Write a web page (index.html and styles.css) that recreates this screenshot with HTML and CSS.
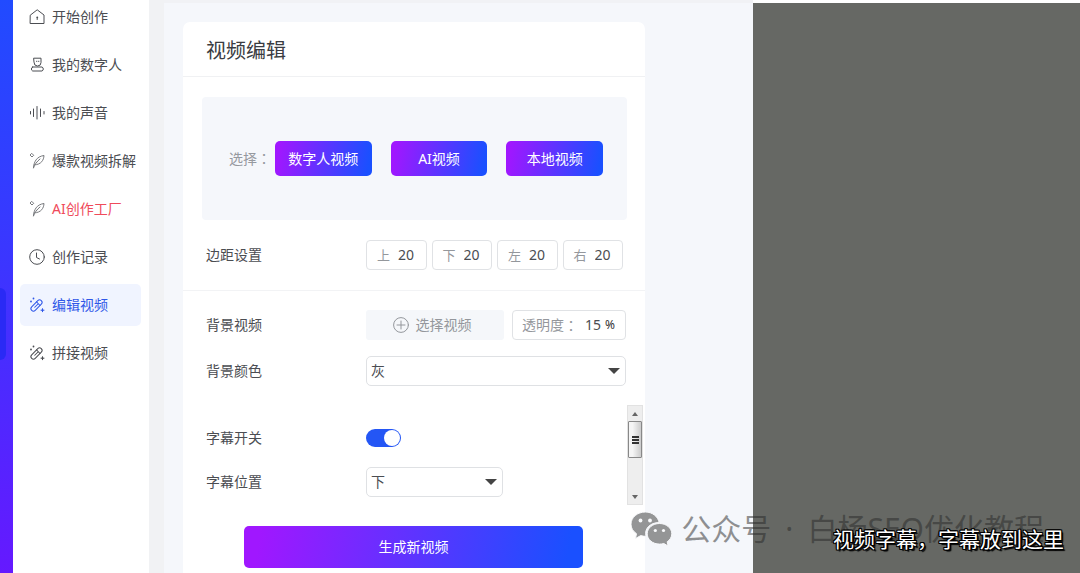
FILE: index.html
```html
<!DOCTYPE html>
<html lang="zh-CN">
<head>
<meta charset="utf-8">
<meta name="viewport" content="width=device-width, initial-scale=1">
<title>视频编辑</title>
<link rel="stylesheet" href="styles.css">
</head>
<body>
<svg class="defs" aria-hidden="true">
  <symbol id="feather" viewBox="0 0 16 16"><path d="M4.500 14.800C4.800 9 7.500 3.500 15 2.500c-.3 4.500-2.500 9-9.800 9.500M4.500 14.800C5.500 11.500 8 8.500 11 6"/><path d="M3 .6 4.700 2.300 3 4 1.300 2.300z"/></symbol>
  <symbol id="wand" viewBox="0 0 16 16"><g transform="rotate(-45 7.500 8.500)"><rect x=".7" y="6" width="13.600" height="5" rx="2.500"/><path d="M10 6v5M5 8.500h5"/></g><path stroke-width="1.800" d="M4.500 1.500v.1M2 4.500v.1M13.500 13.200v.1"/><path d="M12 13.200h3M13.500 11.700v3"/></symbol>
</svg>
<div class="app">
  <div class="rail"><span class="rail-mark"></span></div>
  <nav class="nav">
    <a class="nav-item" href="#"><svg class="icon" viewBox="0 0 16 16"><path d="M1.500 6 8.200.8 15 6v8.500H1.500zM8.200 8v2.500"/><circle cx="8.200" cy="8.500" r=".4"/></svg>开始创作</a>
    <a class="nav-item" href="#"><svg class="icon" viewBox="0 0 16 16"><path d="M5 1.200h7v4.300a3.500 3.500 0 0 1-7 0zM7.500 4.300h.4M9.500 4.300h.4M3.700 10h9.300a2.200 2.200 0 0 1 0 4H3.700a2.200 2.200 0 0 1 0-4z"/></svg>我的数字人</a>
    <a class="nav-item" href="#"><svg class="icon" viewBox="0 0 16 16"><path d="M1.500 6.500v2.500M4.500 4v7.500M8 1.500v12.500M11.500 4v7.500M15 6.500v2.500"/></svg>我的声音</a>
    <a class="nav-item" href="#"><svg class="icon icon-soft"><use href="#feather"/></svg>爆款视频拆解</a>
    <a class="nav-item nav-item-hot" href="#"><svg class="icon icon-soft"><use href="#feather"/></svg>AI创作工厂</a>
    <a class="nav-item" href="#"><svg class="icon" viewBox="0 0 16 16"><circle cx="8" cy="8" r="7.300"/><path d="M7.500 4v4.500l3 1.500"/></svg>创作记录</a>
    <a class="nav-item nav-item-active" href="#" aria-current="page"><svg class="icon"><use href="#wand"/></svg>编辑视频</a>
    <a class="nav-item" href="#"><svg class="icon"><use href="#wand"/></svg>拼接视频</a>
  </nav>
  <main class="editor">
    <form class="panel">
      <h1 class="panel-title">视频编辑</h1>
      <div class="source">
        <span class="source-label">选择<span lang="zh-TW">：</span></span>
        <div class="source-buttons">
          <button class="primary" type="button">数字人视频</button>
          <button class="primary" type="button">AI视频</button>
          <button class="primary" type="button">本地视频</button>
        </div>
      </div>
      <div class="row row-margins">
        <span>边距设置</span>
        <div class="margins">
          <label class="field">上<input type="text" inputmode="numeric" value="20"></label>
          <label class="field">下<input type="text" inputmode="numeric" value="20"></label>
          <label class="field">左<input type="text" inputmode="numeric" value="20"></label>
          <label class="field">右<input type="text" inputmode="numeric" value="20"></label>
        </div>
      </div>
      <div class="rows">
        <div class="row">
          <span>背景视频</span>
          <div class="background">
            <button class="pick" type="button"><svg class="icon" viewBox="0 0 16 16"><circle cx="8" cy="8" r="7.400"/><path d="M8 4v8M4 8h8"/></svg>选择视频</button>
            <label class="field field-opacity">透明度<span lang="zh-TW">：</span><input type="text" inputmode="numeric" value="15"><span class="unit">%</span></label>
          </div>
        </div>
        <div class="row">
          <label for="color">背景颜色</label>
          <div class="select"><select id="color"><option>灰</option></select></div>
        </div>
      </div>
      <div class="subtitles">
        <div class="subtitle-rows">
          <div class="row">
            <label for="subtitle">字幕开关</label>
            <input class="switch" id="subtitle" type="checkbox" role="switch" checked>
          </div>
          <div class="row">
            <label for="position">字幕位置</label>
            <div class="select select-short"><select id="position"><option>下</option></select></div>
          </div>
        </div>
        <div class="scrollbar" aria-hidden="true">
          <span class="arrow arrow-up"></span>
          <span class="thumb"></span>
          <span class="arrow arrow-down"></span>
        </div>
      </div>
      <button class="primary submit" type="submit">生成新视频</button>
    </form>
  </main>
  <section class="preview"></section>
  <div class="watermark">
    <svg class="wechat" viewBox="0 0 42 34" aria-hidden="true">
      <path class="bubble" d="M14.500 0C6.500 0 0 5.400 0 12.200c0 4 2.100 7.200 5.500 9.500L4.500 26.500l5.200-2.900c1.700.5 3.300.7 5.300.7-2-7.500 4-13.800 13.200-13.800C26.800 4.300 21.200 0 14.500 0z"/>
      <path class="bubble" d="M28.500 11.500c-6.800 0-12.300 4.600-12.300 10.300s5.500 10.300 12.300 10.300c1.600 0 3-.2 4.300-.6l4.300 2.500-.9-4.200c2.800-1.900 4.600-4.800 4.600-8 0-5.700-5.500-10.300-12.300-10.300z"/>
      <g class="eye"><circle cx="9.500" cy="8.500" r="1.900"/><circle cx="19" cy="8.500" r="1.900"/><circle cx="24.300" cy="18.500" r="1.600"/><circle cx="32.500" cy="18.500" r="1.600"/></g>
    </svg>
    <span>公众号</span><span>·</span><span>白杨SEO优化教程</span>
  </div>
  <p class="caption">视频字幕，字幕放到这里</p>
</div>
</body>
</html>
```
FILE: styles.css
```css
* { box-sizing: border-box; }
body {
  margin: 0;
  color: #4b4d52;
  font: 14px/20px "Noto Sans", "Noto Sans CJK SC", sans-serif;
}
:lang(zh-TW) { font-family: "Noto Sans CJK TC", sans-serif; }
button, input, select { font: inherit; color: inherit; }
.defs { display: none; }
.app {
  position: relative;
  display: grid;
  grid-template-columns: 13px 151px minmax(0, 589fr) minmax(0, 327fr);
  min-height: 100vh;
  overflow: hidden;
}

.rail {
  display: flex;
  flex-direction: column;
  background: linear-gradient(#214bff 0%, #3b36ff 45%, #6519ff 100%);
}
.rail-mark {
  width: 6px;
  height: 72px;
  margin-top: 288px;
  border-radius: 0 6px 6px 0;
  background: #2a2af5;
}
.nav {
  display: flex;
  flex-direction: column;
  gap: 6px;
  margin-top: -4px;
  padding: 0 8px 0 7px;
  border-right: 15px solid #f1f2f4;
  background: #fff;
}
.nav-item {
  display: flex;
  align-items: center;
  gap: 7px;
  height: 42px;
  padding-left: 9px;
  border-radius: 5px;
  color: inherit;
  text-decoration: none;
  white-space: nowrap;
}
.nav-item-hot { color: #ef4b5b; }
.nav-item-active { background: #f0f4ff; color: #2f57e8; }
.icon {
  flex: none;
  width: 16px;
  height: 16px;
  fill: none;
  stroke: currentColor;
  stroke-linecap: round;
  stroke-linejoin: round;
}
.icon-soft { color: #77797d; }

.editor {
  padding: 19px 108px 0 19px;
  border-top: 3px solid #f1f2f5;
  background: #f5f7fb;
}
.panel {
  display: flex;
  flex-direction: column;
  height: 100%;
  border-radius: 7px 7px 0 0;
  background: #fff;
}
.panel-title {
  margin: 0;
  padding: 15px 23px 11px;
  border-bottom: 1px solid #f0f1f3;
  font-size: 20px;
  font-weight: 400;
  line-height: 28px;
  color: #3a3c42;
}
.source {
  display: flex;
  align-items: center;
  gap: 4px;
  height: 123px;
  margin: 20px 18px 20px 19px;
  padding: 0 24px 0 27px;
  border-radius: 4px;
  background: #f5f7fb;
  color: #96999f;
}
.source-label { white-space: nowrap; }
.source-buttons {
  flex: 1;
  display: grid;
  grid-template-columns: repeat(3, 1fr);
  gap: 19px;
}
.primary {
  height: 35px;
  padding: 0;
  border: 0;
  border-radius: 5px;
  background: linear-gradient(100deg, #a017ff 5%, #1a50ff 95%);
  color: #fff;
  white-space: nowrap;
}

.row {
  display: grid;
  grid-template-columns: 160px minmax(0, 1fr);
  align-items: center;
  min-height: 30px;
  padding: 0 19px 0 23px;
}
.row-margins { padding-bottom: 20px; border-bottom: 1px solid #f2f3f5; }
.margins {
  display: grid;
  grid-template-columns: repeat(4, 1fr);
  gap: 5px;
  padding-right: 3px;
}
.field {
  display: flex;
  align-items: center;
  gap: 8px;
  height: 30px;
  padding-left: 10px;
  border: 1px solid #e0e2e5;
  border-radius: 4px;
  color: #94979c;
  font-size: 13px;
  white-space: nowrap;
}
.field input {
  width: 24px;
  padding: 0;
  border: 0;
  background: none;
  color: #4b4d52;
  font-size: 14px;
}
.rows { display: grid; gap: 16px; padding-top: 19px; }
.background {
  display: grid;
  grid-template-columns: minmax(0, 138fr) minmax(0, 114fr);
  gap: 8px;
}
.pick {
  display: flex;
  align-items: center;
  justify-content: center;
  gap: 7px;
  height: 30px;
  padding: 0 6px 0 0;
  border: 0;
  border-radius: 3px;
  background: #f5f7fa;
  color: #94979c;
}
.field-opacity { gap: 0; padding-left: 9px; font-size: 14px; }
.field-opacity input { width: 20px; margin-left: 7px; }
.unit { color: #333; font-size: 12px; }
.select { position: relative; }
.select select {
  display: block;
  width: 100%;
  height: 30px;
  padding: 0 24px 0 4px;
  border: 1px solid #dfe1e4;
  border-radius: 5px;
  background: #fff;
  appearance: none;
}
.select::after {
  content: "";
  position: absolute;
  top: 12px;
  right: 6px;
  border: solid transparent;
  border-width: 6px 6px 0;
  border-top-color: #444;
  pointer-events: none;
}
.select-short { width: 137px; }

.subtitles {
  display: flex;
  height: 100px;
  margin: 19px 2px 21px 0;
}
.subtitle-rows {
  flex: 1;
  display: grid;
  align-content: start;
  gap: 14px;
  padding-top: 18px;
}
.switch {
  appearance: none;
  width: 35px;
  height: 18px;
  margin: 0;
  border-radius: 9px;
  background: #2456f5;
}
.switch::before {
  content: "";
  display: block;
  width: 16px;
  height: 16px;
  margin: 1px 1px 1px auto;
  border-radius: 50%;
  background: #fff;
}
.scrollbar {
  display: flex;
  flex-direction: column;
  align-items: center;
  width: 16px;
  padding: 6px 0 5px;
  border: 1px solid #e2e2e2;
  background: #eee;
}
.arrow { border: solid transparent; }
.arrow-up { border-width: 0 3px 4px; border-bottom-color: #666; }
.arrow-down { margin-top: auto; border-width: 4px 3px 0; border-top-color: #666; }
.thumb {
  display: flex;
  align-items: center;
  justify-content: center;
  width: 14px;
  height: 37px;
  margin-top: 5px;
  border: 1px solid #888;
  border-radius: 1px;
  background: linear-gradient(90deg, #f5f5f5 30%, #ccc);
}
.thumb::before {
  content: "";
  width: 7px;
  height: 8px;
  background: repeating-linear-gradient(#333 0 2px, transparent 2px 3px);
}
.submit { height: 42px; margin: 0 62px 5px 61px; }

.preview { margin-top: 3px; background: #666864; }
.watermark {
  position: absolute;
  right: 36px;
  bottom: 24px;
  display: flex;
  align-items: center;
  gap: 14px;
  color: rgba(40, 40, 40, .5);
  font-size: 30px;
  line-height: 40px;
  white-space: nowrap;
  pointer-events: none;
}
.wechat { width: 42px; height: 34px; margin-right: -6px; }
.bubble { fill: #949596; stroke: #f8f9fb; stroke-width: 1; }
.eye { fill: #f8f9fb; }
.caption {
  position: absolute;
  right: 16px;
  bottom: 20px;
  margin: 0;
  color: #fff;
  font-size: 21px;
  line-height: 28px;
  white-space: nowrap;
  text-shadow: 1px 0 #000, -1px 0 #000, 0 1px #000, 0 -1px #000, 1px 1px #000, -1px 1px #000, 1px -1px #000, -1px -1px #000, 2px 2px 1px #000;
}
```
